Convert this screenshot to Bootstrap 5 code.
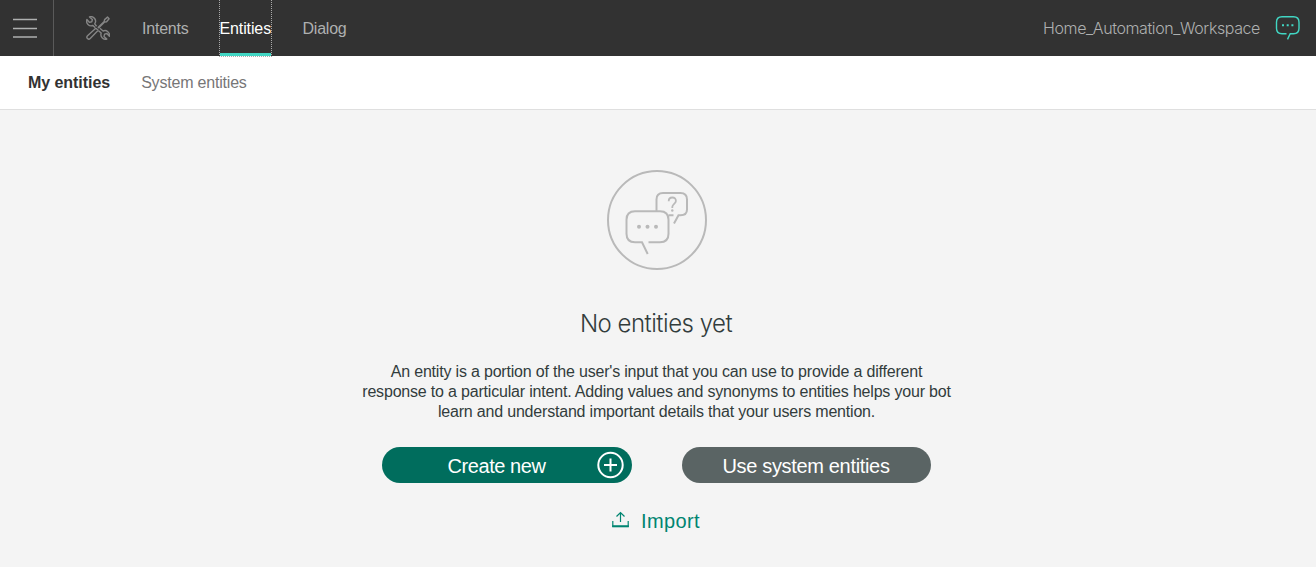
<!DOCTYPE html>
<html lang="en">
<head>
<meta charset="utf-8">
<meta name="viewport" content="width=device-width, initial-scale=1">
<title>Entities</title>
<link href="https://cdn.jsdelivr.net/npm/bootstrap@5.3.0/dist/css/bootstrap.min.css" rel="stylesheet">
<style>
  body { font-family: "Liberation Sans", Arial, sans-serif; font-size: 16px; background: #f4f4f4; color: #323c3c; height: 567px; overflow: hidden; }
  .topbar { height: 56px; background: #323232; color: #aeb0b0; }
  .menu-btn { width: 54px; border: 0; border-right: 1px solid #5a5a5a; background: none; padding: 0 0 0 12px; }
  .tools { margin-left: 32px; }
  .tab-link { color: #aeb0b0; text-decoration: none; letter-spacing: -.22px; line-height: 58px; height: 56px; }
  .tab-intents { margin-left: 32px; }
  .tab-entities { margin-left: 30px; width: 53px; height: 57px; color: #fff; border: 1px dotted #aaa; border-top: 0; box-shadow: inset 0 -3px #41d6c3; letter-spacing: -.12px; white-space: nowrap; position: relative; }
  .tab-dialog { margin-left: 31px; }
  .workspace { font-family: Inter, "Liberation Sans", sans-serif; font-weight: 300; font-size: 16px; letter-spacing: -.4px; margin-right: 15px; }
  .chat-icon { margin-right: 16px; }
  .subbar { height: 54px; background: #fff; border-bottom: 1px solid #dfdfdf; padding-left: 28px; }
  .subbar a { text-decoration: none; color: #777677; letter-spacing: -.2px; line-height: 53px; }
  .subbar a.current { color: #323232; font-weight: 700; letter-spacing: -.05px; margin-right: 31px; }
  .empty-state { padding-right: 4px; }
  .empty-art { margin: 59px 0 0 2px; }
  .empty-title { font-family: Inter, "Liberation Sans", sans-serif; font-weight: 300; font-size: 24px; line-height: 30px; letter-spacing: -.5px; margin: 38px 0 23px; }
  .empty-text { line-height: 20px; letter-spacing: -.19px; margin: 0 0 25px 1px; }
  .pill { height: 36px; width: 250px; font-size: 20px; line-height: 38px; padding: 0; color: #fff; letter-spacing: -.33px; }
  .pill-create { background: #006d5d; padding-right: 7px; letter-spacing: -.45px; }
  .pill-create span { padding: 2px 0 0 15px; }
  .pill-system { background: #5a6464; width: 249px; }
  .actions { gap: 50px; }
  .import-link { margin-top: 23px; color: #008571; font-size: 20px; line-height: 30px; text-decoration: none; gap: 12px; letter-spacing: .35px; }
  .import-link svg { margin-bottom: 3px; }
</style>
</head>
<body>
<header class="topbar d-flex align-items-stretch">
  <button class="menu-btn d-flex align-items-center" aria-label="Menu">
    <svg width="26" height="22" fill="none" stroke="#aeb0b0" stroke-width="1.5"><path d="M1 2.5h24M1 11.5h24M1 20h24"/></svg>
  </button>
  <div class="tools d-flex align-items-center">
    <svg width="24" height="24" viewBox="0 0 24 24" fill="none" stroke="#858585" stroke-width="1.4" stroke-linejoin="round">
      <path d="M9.800 12.200 1.500 19.800a1.900 1.900 0 0 0 2.700 2.700l8-8.200M11.800 11.700l6.400-6.200.4-1.900L21.500 1.100l1.600 1.600-2.500 3-2 .3-6.300 6.200M9.800 12.200l2.400 2.100"/>
      <path d="M10.600 10.200 8.700 7.900a4.600 4.600 0 0 0-5.200-7l2.900 2.600-.6 2.300-2.300.6L.9 3.600a4.600 4.600 0 0 0 6 5.900l2.400 2.300M12.300 14.400l2.900 2.700a4.600 4.600 0 0 0 5.600 6l-2.800-2.700.6-2.300 2.300-.6 2.500 2.700a4.600 4.600 0 0 0-6.300-5.200l-3.200-2.700"/>
    </svg>
  </div>
  <nav class="d-flex">
    <a href="#" class="tab-link tab-intents">Intents</a>
    <a href="#" class="tab-link tab-entities">Entities</a>
    <a href="#" class="tab-link tab-dialog">Dialog</a>
  </nav>
  <div class="ms-auto d-flex align-items-center">
    <span class="workspace">Home_Automation_Workspace</span>
    <svg class="chat-icon" width="25" height="24" viewBox="0 0 25 24" fill="none" stroke="#41d6c3" stroke-width="1.4"><path d="M11.500 17.700H7Q1.500 17.700 1.500 12.200V6.300Q1.500 .8 7 .8h11.500Q24 .8 24 6.300v5.900q0 5.500-5.500 5.500h-3.300l-2.700 5.700"/><path d="M7 9.300h2m2.700 0h2m2.700 0h2" stroke-width="2"/></svg>
  </div>
</header>
<div class="subbar d-flex">
  <a href="#" class="current">My entities</a>
  <a href="#">System entities</a>
</div>
<main class="empty-state d-flex flex-column align-items-center text-center">
  <svg class="empty-art" width="102" height="102" viewBox="0 0 102 102" fill="none" stroke="#b9b9b9" stroke-width="2">
    <circle cx="51" cy="51" r="49"/>
    <path d="M42.500 73.300H54q8.500 0 8.500-8.500V50.800q0-8.500-8.500-8.500H29q-8.500 0-8.500 8.500v14q0 8.500 8.500 8.500h7l5.700 11.700"/>
    <path d="M50.500 42V30.500q0-6.500 6.500-6.500h17.500q6.500 0 6.500 6.500v10q0 5.700-6.500 5.700H72.500l-4.500 8.300M62.500 46.200h5"/>
    <path d="M62.700 32.200q0-3.700 3.600-3.700t3.600 3.500c0 2.800-3.600 3-3.600 6v1" stroke-width="1.800"/>
    <circle cx="66.300" cy="41.500" r="1.200" fill="#b9b9b9" stroke="none"/>
    <g fill="#b9b9b9" stroke="none"><circle cx="33" cy="57.700" r="2"/><circle cx="41.500" cy="57.700" r="2"/><circle cx="50" cy="57.700" r="2"/></g>
  </svg>
  <h1 class="empty-title">No entities yet</h1>
  <p class="empty-text">An entity is a portion of the user's input that you can use to provide a different<br>response to a particular intent. Adding values and synonyms to entities helps your bot<br>learn and understand important details that your users mention.</p>
  <div class="actions d-flex">
    <button class="btn pill pill-create rounded-pill border-0 d-flex align-items-center"><span class="flex-grow-1">Create new</span>
      <svg width="28" height="28" viewBox="0 0 28 28" fill="none" stroke="#fff" stroke-width="2"><circle cx="13.500" cy="14" r="12.200"/><path d="M7 14h13M13.500 7.500v13"/></svg>
    </button>
    <button class="btn pill pill-system rounded-pill border-0">Use system entities</button>
  </div>
  <a href="#" class="import-link d-flex align-items-center">
    <svg width="17" height="17" viewBox="0 0 17 17" fill="none" stroke="#008571" stroke-width="1.200"><path d="M8.500 11V1.500M4.500 5.500l4-4 4 4"/><path d="M.800 10v5.300h15.400V10" /><path d="M.200 15.300h16.600" stroke-width="2"/></svg>
    Import
  </a>
</main>
<script src="https://cdn.jsdelivr.net/npm/bootstrap@5.3.0/dist/js/bootstrap.bundle.min.js"></script>
</body>
</html>
